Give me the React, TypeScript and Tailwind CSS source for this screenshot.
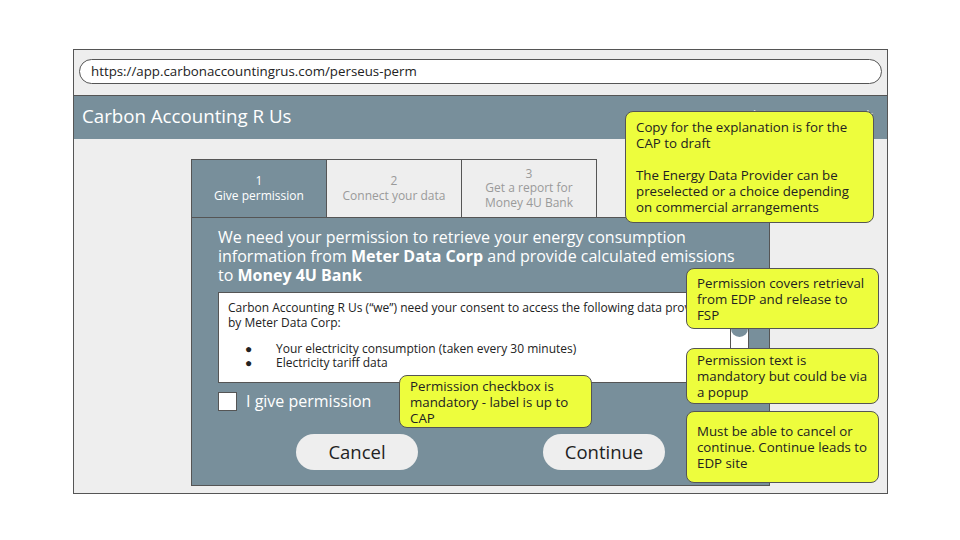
import React from 'react';

const slate = 'bg-[#788f9b]';

function Note({ className, children }: { className: string; children: React.ReactNode }) {
  return (
    <div
      className={`absolute rounded-[8px] border border-[#555] bg-[#edfd3d] px-[10px] text-[13.3px] leading-[16px] text-[#222] flex flex-col justify-center ${className}`}
    >
      {children}
    </div>
  );
}

function Tab({ lines, active }: { lines: string[]; active?: boolean }) {
  return (
    <div
      className={`-ml-px first:ml-0 w-[136px] h-[58px] border border-b-0 border-[#555] flex flex-col items-center justify-center text-[12px] leading-[14.5px] text-center ${
        active ? `${slate} text-white` : 'bg-[#eeeeee] text-[#9a9a9a]'
      }`}
    >
      {lines.map((l) => (
        <span key={l}>{l}</span>
      ))}
    </div>
  );
}

export default function App() {
  return (
    <div className="relative w-[960px] h-[540px] bg-white pt-[49px] pl-[73px] font-['Open_Sans',sans-serif] text-[#222]">
      {/* Browser frame */}
      <div className="w-[815px] h-[445px] border border-[#555] bg-[#eeeeee] flex flex-col">
        {/* URL bar */}
        <div className="h-[45px] px-[5px] pt-[9px]">
          <div className="h-[25px] rounded-full border border-[#555] bg-white px-[11px] flex items-center text-[13.3px] text-[#222]">
            https://app.carbonaccountingrus.com/perseus-perm
          </div>
        </div>

        {/* App header */}
        <div className={`h-[44px] border-t border-[#555] ${slate} flex items-center justify-between pl-[8px] pr-[14px] pb-[3px]`}>
          <span className="text-[18.7px] text-white">Carbon Accounting R Us</span>
          <span className="text-[13px] text-white/80">Logged in: Money 4U Bank</span>
        </div>

        {/* Content */}
        <div className="pl-[117px] pt-[20px]">
          <div className="flex">
            <Tab lines={['1', 'Give permission']} active />
            <Tab lines={['2', 'Connect your data']} />
            <Tab lines={['3', 'Get a report for', 'Money 4U Bank']} />
          </div>

          <div className={`w-[579px] h-[269px] border border-[#555] ${slate} pl-[26px] pr-[20px] pt-[10px]`}>
            <p className="text-[16px] leading-[19px] text-white">
              We need your permission to retrieve your energy consumption information from{' '}
              <b>Meter Data Corp</b> and provide calculated emissions to <b>Money 4U Bank</b>
            </p>

            <div className="mt-[7px] w-[531px] h-[91px] border border-[#555] bg-white flex">
              <div className="flex-1 min-w-0 pl-[9px] pt-[7px] text-[12px] leading-[15px] text-[#222]">
                <p className="w-[490px]">
                  Carbon Accounting R Us (“we”) need your consent to access the following data provided by Meter Data Corp:
                </p>
                <ul className="mt-[12px] leading-[14px]">
                  <li className="flex">
                    <span className="w-[48px] pl-[17px]">●</span>Your electricity consumption (taken every 30 minutes)
                  </li>
                  <li className="flex">
                    <span className="w-[48px] pl-[17px]">●</span>Electricity tariff data
                  </li>
                </ul>
              </div>
              <div className="w-[18px] border-l border-[#555]">
                <div className={`h-[44px] w-full rounded-b-[9px] ${slate}`} />
              </div>
            </div>

            <div className="mt-[6px] flex items-center gap-[9px]">
              <div className="w-[19px] h-[19px] border border-[#555] bg-white" />
              <span className="text-[16px] text-white">I give permission</span>
            </div>

            <div className="mt-[21px] -ml-[6px] flex justify-center gap-[125px]">
              <button className="w-[122px] h-[36px] rounded-full bg-[#eeeeee] text-[18.5px] text-[#222]">Cancel</button>
              <button className="w-[122px] h-[36px] rounded-full bg-[#eeeeee] text-[18.5px] text-[#222]">Continue</button>
            </div>
          </div>
        </div>
      </div>

      {/* Annotations */}
      <Note className="left-[625px] top-[111px] w-[249px] h-[112px] !justify-start pt-[7px]">
        <p>Copy for the explanation is for the CAP to draft</p>
        <p className="mt-[16px]">The Energy Data Provider can be preselected or a choice depending on commercial arrangements</p>
      </Note>
      <Note className="left-[686px] top-[268px] w-[193px] h-[61px]">
        <p>Permission covers retrieval from EDP and release to FSP</p>
      </Note>
      <Note className="left-[686px] top-[348px] w-[193px] h-[56px]">
        <p>Permission text is mandatory but could be via a popup</p>
      </Note>
      <Note className="left-[686px] top-[411px] w-[193px] h-[72px]">
        <p>Must be able to cancel or continue. Continue leads to EDP site</p>
      </Note>
      <Note className="left-[399px] top-[375px] w-[193px] h-[53px]">
        <p>Permission checkbox is mandatory - label is up to CAP</p>
      </Note>
    </div>
  );
}
